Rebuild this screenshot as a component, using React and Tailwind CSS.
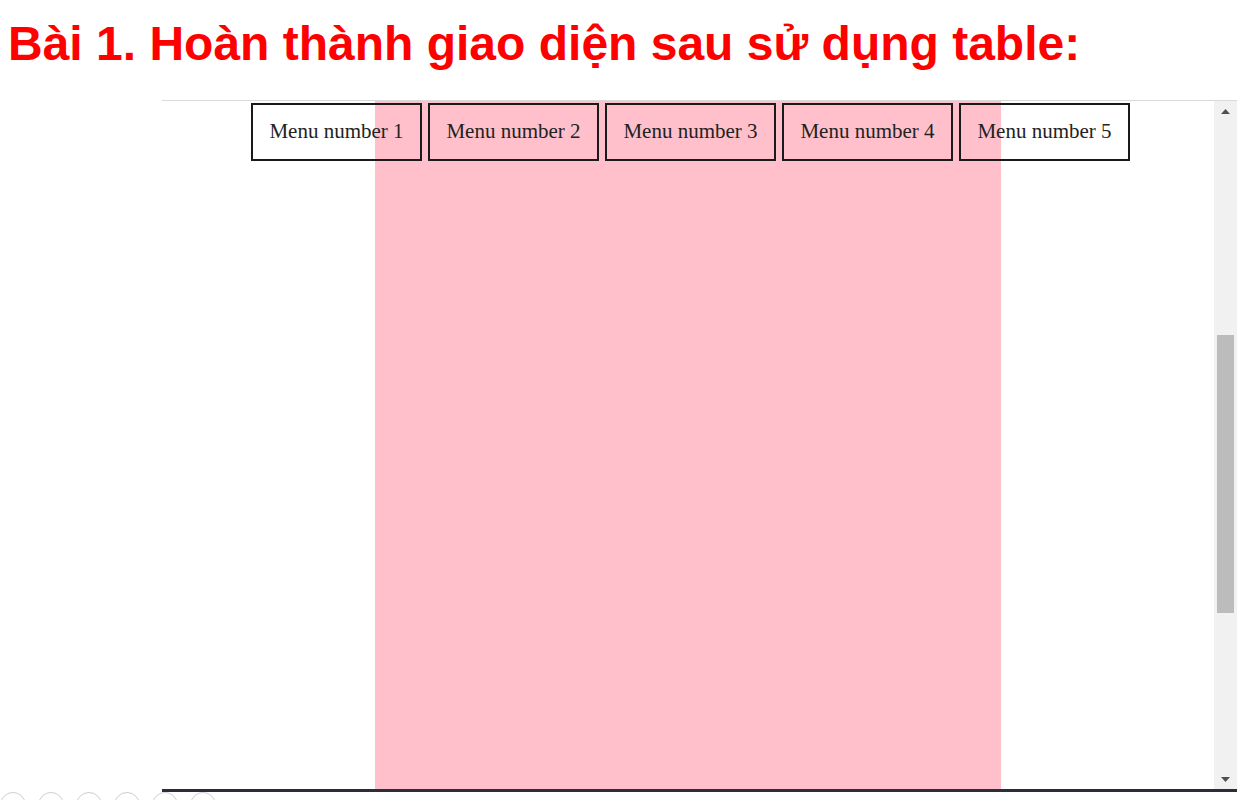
import React from 'react';

const menus = ['Menu number 1', 'Menu number 2', 'Menu number 3', 'Menu number 4', 'Menu number 5'];

export default function App() {
  return (
    <div className="w-[1259px] h-[800px] overflow-hidden bg-white relative">
      {/* Slide title */}
      <h1 className="pl-[8px] pt-[20px] text-[48px] leading-none font-bold text-[#ff0000] font-['Liberation_Sans',Arial,sans-serif] whitespace-nowrap">
        Bài 1. Hoàn thành giao diện sau sử dụng table:
      </h1>

      {/* Browser frame */}
      <div className="ml-[162px] mt-[32px] w-[1075px] flex flex-col">
        <div className="h-px bg-[#d9d9d9]" />
        <div className="h-[688px] flex relative">
          <div className="flex-1 flex">
            <div className="w-[213px]" />
            <div className="w-[626px] bg-[#ffc0cb]" />
            <div className="flex-1" />
          </div>

          {/* menu table row */}
          <div className="absolute top-[2px] left-[89px] flex gap-[6px] font-['Liberation_Serif','Times_New_Roman',serif] text-[21px] text-[#222]">
            {menus.map((m) => (
              <div
                key={m}
                className="w-[171px] h-[58px] border-2 border-[#1a1a1a] flex items-center justify-center whitespace-nowrap"
              >
                {m}
              </div>
            ))}
          </div>

          {/* scrollbar */}
          <div className="w-[23px] bg-[#f1f1f1] flex flex-col items-center">
            <div className="h-[20px] w-full flex items-center justify-center">
              <svg width="9" height="5" viewBox="0 0 9 5"><path d="M0 5 L4.5 0 L9 5 Z" fill="#505050" /></svg>
            </div>
            <div className="mt-[214px] w-[17px] h-[278px] bg-[#bcbcbc]" />
            <div className="flex-1" />
            <div className="h-[20px] w-full flex items-center justify-center">
              <svg width="9" height="5" viewBox="0 0 9 5"><path d="M0 0 L9 0 L4.5 5 Z" fill="#505050" /></svg>
            </div>
          </div>
        </div>
        <div className="h-[3px] bg-[#2b2e3a]" />
      </div>

      {/* slideshow control circles, clipped at the bottom */}
      <div className="absolute left-0 top-[792px] flex gap-[12px]">
        {[0, 1, 2, 3, 4, 5].map((i) => (
          <div key={i} className="w-[26px] h-[26px] rounded-full border border-[#cfcfcf]" />
        ))}
      </div>
    </div>
  );
}
